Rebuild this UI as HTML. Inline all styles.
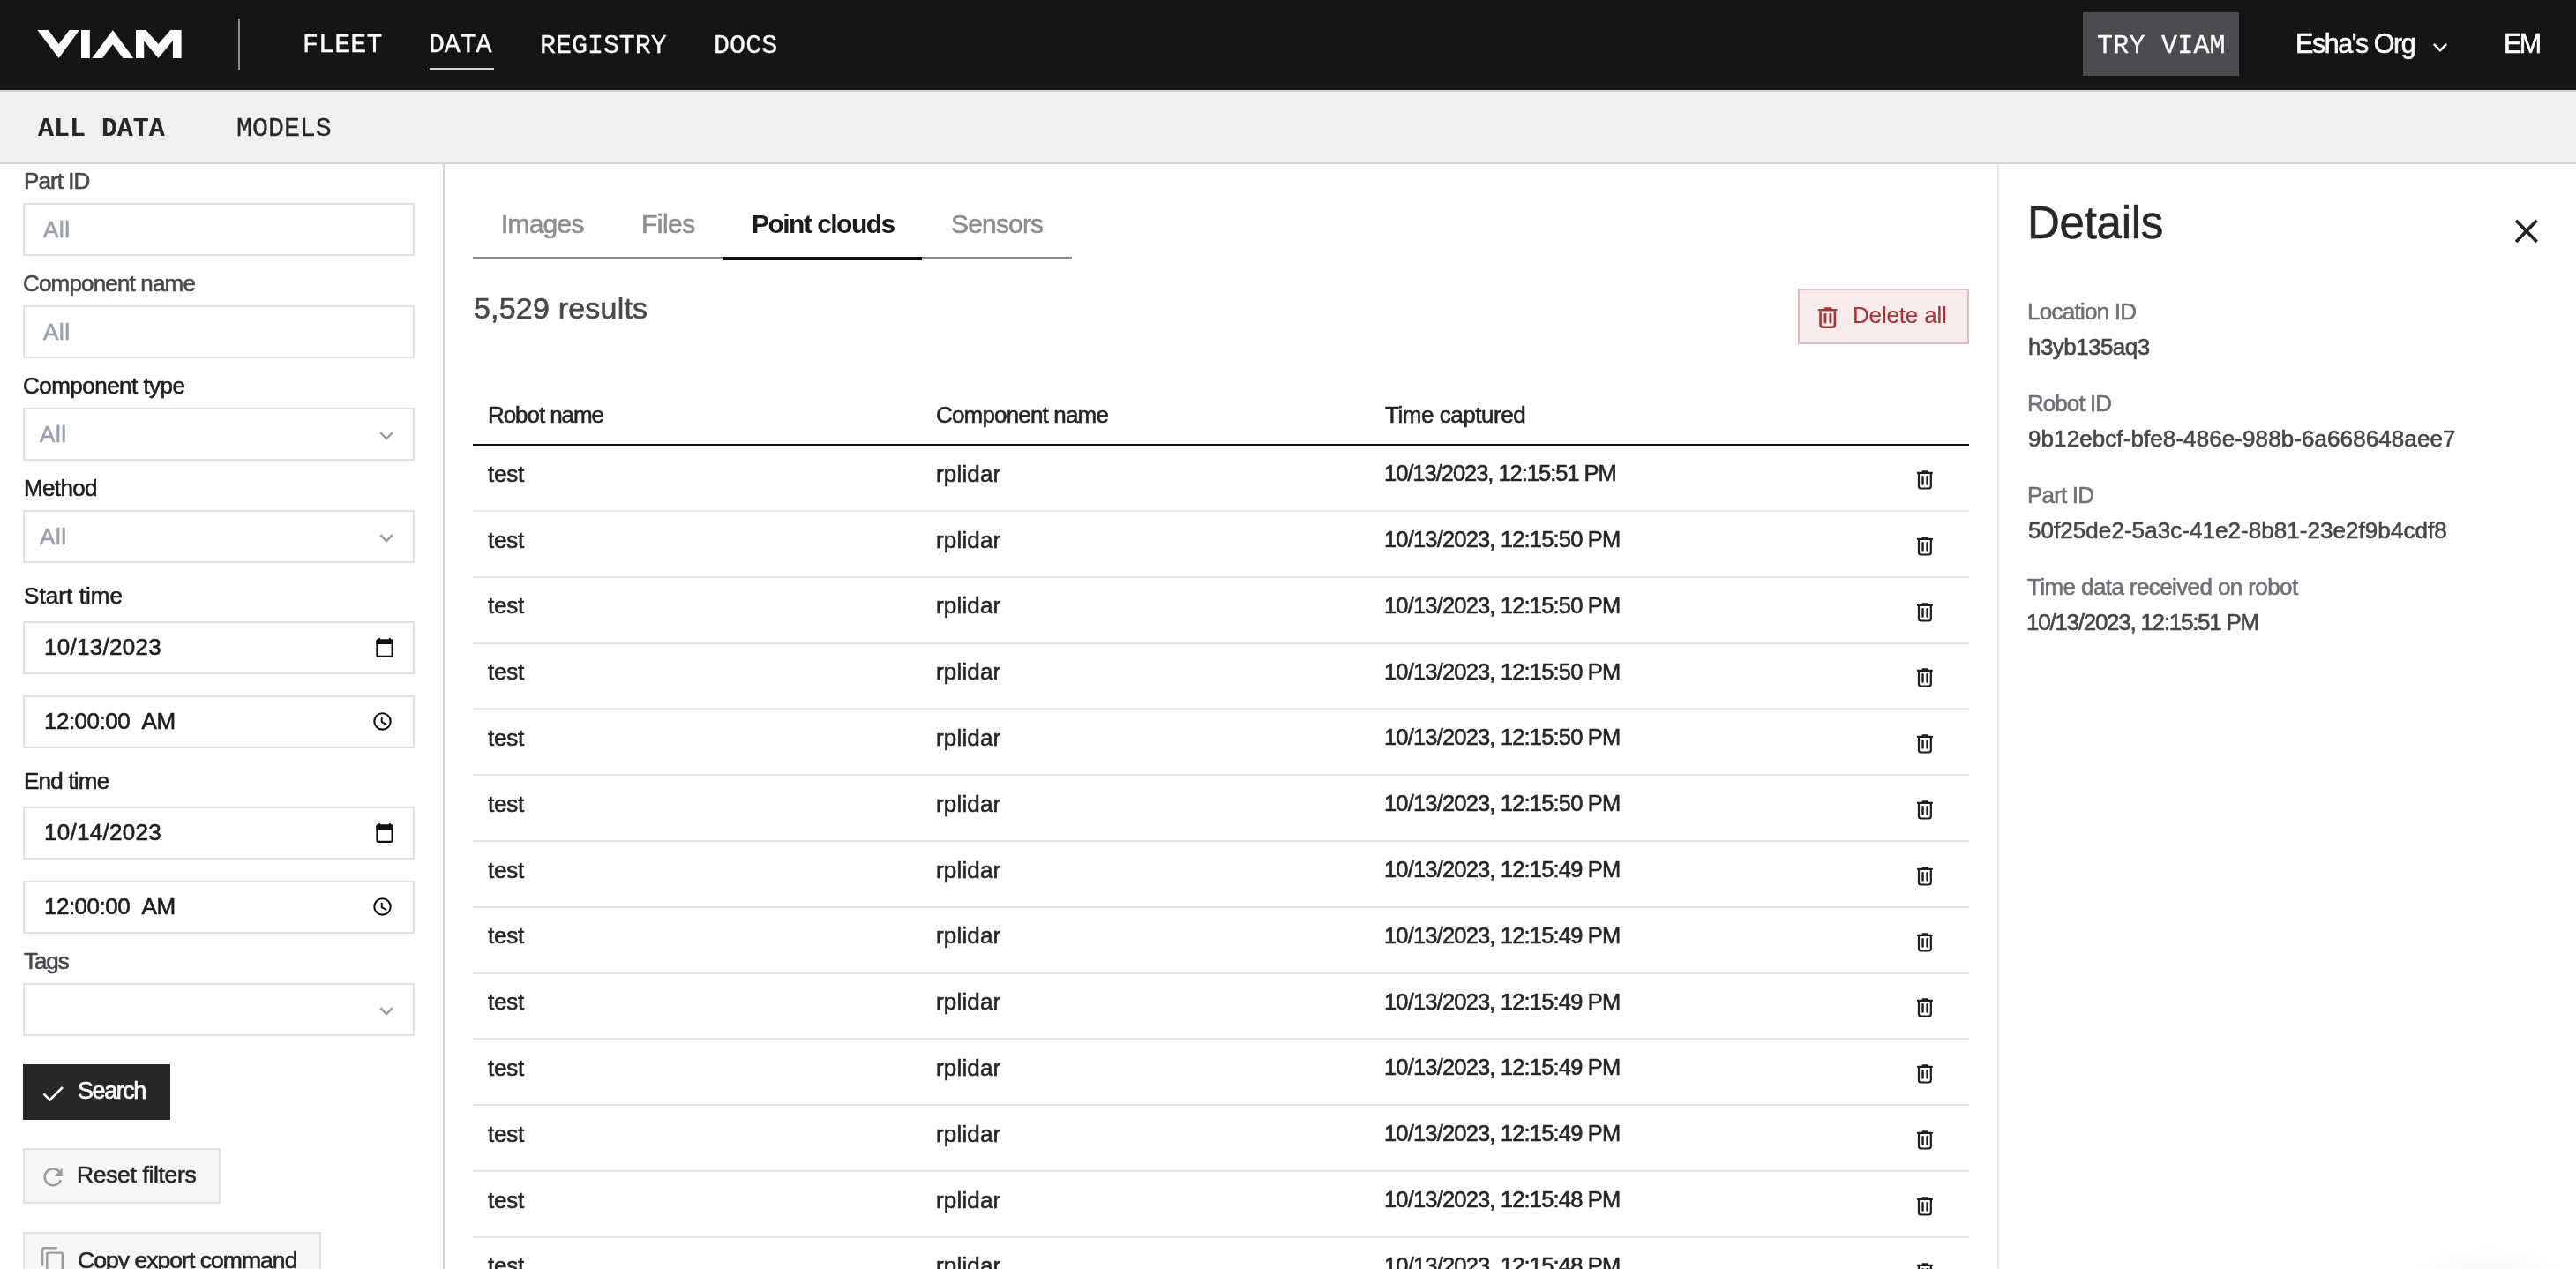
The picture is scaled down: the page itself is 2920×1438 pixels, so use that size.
<!DOCTYPE html><html><head><meta charset="utf-8"><title>Viam Data</title><style>
html,body{margin:0;padding:0;width:2920px;height:1438px;overflow:hidden;background:#fff;}
body{position:relative;font-family:"Liberation Sans", sans-serif;}
.t{position:absolute;white-space:nowrap;will-change:transform;-webkit-text-stroke:0.6px currentColor;}
.s{font-family:"Liberation Sans", sans-serif;}
.m{font-family:"Liberation Mono", monospace;}
.r{position:absolute;box-sizing:border-box;}
svg{position:absolute;overflow:visible;}
@media (max-width:2000px){html{zoom:0.5;}}
</style></head><body>
<div class="r" style="left:0px;top:0px;width:2920px;height:102px;background:#141616;"></div>
<div class="r" style="left:0px;top:102px;width:2920px;height:2px;background:#d3d3d7;"></div>
<div class="r" style="left:0px;top:104px;width:2920px;height:80px;background:#f0f0f2;"></div>
<div class="r" style="left:0px;top:184px;width:2920px;height:2px;background:#d4d4d8;"></div>
<svg style="left:0;top:0" width="260" height="100"><path fill="#fff" d="M42.4,34 L54.8,34 L66.6,50 L78.6,34 L90,34 L66.6,66 Z M92,34 L101.8,34 L101.8,66 L92,66 Z M104.3,66 L127.8,34 L151.3,66 L139.5,66 L127.8,50.3 L116,66 Z M154,34 L165.4,34 L179.5,50 L193.2,34 L205.6,34 L205.6,66 L195.9,66 L195.9,46 L179.5,66 L163.2,46.6 L163.2,66 L154,66 Z"/></svg>
<div class="r" style="left:270px;top:21px;width:2px;height:58px;background:#8c8c8c;"></div>
<div class="t m" style="left:343.00px;top:36.37px;font-size:30px;line-height:30px;color:#fff;letter-spacing:0.100px;-webkit-text-stroke-width:0.3px;">FLEET</div>
<div class="t m" style="left:486.00px;top:36.37px;font-size:30px;line-height:30px;color:#fff;letter-spacing:-0.133px;-webkit-text-stroke-width:0.3px;">DATA</div>
<div class="r" style="left:487px;top:77px;width:73px;height:2px;background:#d4d4dc;"></div>
<div class="t m" style="left:611.50px;top:36.52px;font-size:30px;line-height:30px;color:#fff;letter-spacing:-0.029px;-webkit-text-stroke-width:0.3px;">REGISTRY</div>
<div class="t m" style="left:809.00px;top:36.52px;font-size:30px;line-height:30px;color:#fff;letter-spacing:0.067px;-webkit-text-stroke-width:0.3px;">DOCS</div>
<div class="r" style="left:2361px;top:14px;width:177px;height:72px;background:#4b4c50;"></div>
<div class="t m" style="left:2376.50px;top:36.52px;font-size:30px;line-height:30px;color:#fff;letter-spacing:0.229px;-webkit-text-stroke-width:0.3px;">TRY VIAM</div>
<div class="t s" style="left:2602.00px;top:33.68px;font-size:30.5px;line-height:30.5px;color:#fff;letter-spacing:-1.467px;">Esha&#39;s Org</div>
<svg style="left:2757px;top:47.6px" width="18" height="12"><path d="M1.8,1.8 L9,9.2 L16.2,1.8" fill="none" stroke="#fff" stroke-width="2.4"/></svg>
<div class="t s" style="left:2837.50px;top:34.08px;font-size:30.5px;line-height:30.5px;color:#fff;letter-spacing:-2.600px;">EM</div>
<div class="t m" style="left:42.50px;top:130.72px;font-size:30px;line-height:30px;color:#262626;letter-spacing:-0.029px;font-weight:700;-webkit-text-stroke-width:0.1px;">ALL DATA</div>
<div class="t m" style="left:268.00px;top:130.52px;font-size:30px;line-height:30px;color:#262626;letter-spacing:-0.040px;-webkit-text-stroke-width:0.3px;">MODELS</div>
<div class="r" style="left:502px;top:186px;width:2px;height:1252px;background:#d5d5d7;"></div>
<div class="t s" style="left:27.00px;top:192.39px;font-size:26px;line-height:26px;color:#45484d;letter-spacing:-0.933px;">Part ID</div>
<div class="r" style="left:26px;top:230px;width:444px;height:60px;border:2px solid #e0e0e3;background:#fff;"></div>
<div class="t s" style="left:48.50px;top:246.99px;font-size:26px;line-height:26px;color:#98a0ad;letter-spacing:0.600px;">All</div>
<div class="t s" style="left:25.50px;top:308.39px;font-size:26px;line-height:26px;color:#46484d;letter-spacing:-0.831px;">Component name</div>
<div class="r" style="left:26px;top:346px;width:444px;height:60px;border:2px solid #e0e0e3;background:#fff;"></div>
<div class="t s" style="left:48.50px;top:362.99px;font-size:26px;line-height:26px;color:#98a0ad;letter-spacing:0.600px;">All</div>
<div class="t s" style="left:25.50px;top:424.39px;font-size:26px;line-height:26px;color:#1e1e1e;letter-spacing:-0.523px;">Component type</div>
<div class="r" style="left:26px;top:462px;width:444px;height:60px;border:2px solid #e0e0e3;background:#fff;"></div>
<div class="t s" style="left:44.50px;top:478.99px;font-size:26px;line-height:26px;color:#98a0ad;letter-spacing:0.600px;">All</div>
<svg style="left:430px;top:489px" width="17" height="11"><path d="M1.3,1.2 L8,8.3 L14.7,1.2" fill="none" stroke="#9a9ca3" stroke-width="2.5"/></svg>
<div class="t s" style="left:26.50px;top:540.19px;font-size:26px;line-height:26px;color:#1e1e1e;letter-spacing:-0.640px;">Method</div>
<div class="r" style="left:26px;top:578px;width:444px;height:60px;border:2px solid #e0e0e3;background:#fff;"></div>
<div class="t s" style="left:44.50px;top:594.99px;font-size:26px;line-height:26px;color:#98a0ad;letter-spacing:0.600px;">All</div>
<svg style="left:430px;top:605px" width="17" height="11"><path d="M1.3,1.2 L8,8.3 L14.7,1.2" fill="none" stroke="#9a9ca3" stroke-width="2.5"/></svg>
<div class="t s" style="left:26.50px;top:662.39px;font-size:26px;line-height:26px;color:#1e1e1e;letter-spacing:0.089px;">Start time</div>
<div class="r" style="left:26px;top:704px;width:444px;height:60px;border:2px solid #e0e0e3;background:#fff;"></div>
<div class="t s" style="left:49.50px;top:720.49px;font-size:26px;line-height:26px;color:#1e1e1e;letter-spacing:0.289px;">10/13/2023</div>
<svg style="left:426px;top:723px" width="22" height="22"><rect x="1.4" y="2.5" width="17.2" height="18.4" rx="1.6" fill="none" stroke="#111" stroke-width="2.1"/><rect x="0.4" y="1.5" width="19.2" height="5.6" rx="1.2" fill="#111"/><rect x="3.2" y="0" width="1.9" height="2.5" fill="#111"/><rect x="14.9" y="0" width="1.9" height="2.5" fill="#111"/></svg>
<div class="r" style="left:26px;top:788px;width:444px;height:60px;border:2px solid #e0e0e3;background:#fff;"></div>
<div class="t s" style="left:49.50px;top:804.39px;font-size:26px;line-height:26px;color:#1e1e1e;letter-spacing:-0.509px;">12:00:00&nbsp;&nbsp;AM</div>
<svg style="left:422px;top:807px" width="24" height="24"><circle cx="11.5" cy="10.4" r="9.2" fill="none" stroke="#111" stroke-width="2.1"/><path d="M10.7,5.8 L10.7,11.2 L16.2,14.2" fill="none" stroke="#111" stroke-width="1.9"/></svg>
<div class="t s" style="left:27.00px;top:872.49px;font-size:26px;line-height:26px;color:#1e1e1e;letter-spacing:-0.771px;">End time</div>
<div class="r" style="left:26px;top:914px;width:444px;height:60px;border:2px solid #e0e0e3;background:#fff;"></div>
<div class="t s" style="left:49.50px;top:930.49px;font-size:26px;line-height:26px;color:#1e1e1e;letter-spacing:0.289px;">10/14/2023</div>
<svg style="left:426px;top:933px" width="22" height="22"><rect x="1.4" y="2.5" width="17.2" height="18.4" rx="1.6" fill="none" stroke="#111" stroke-width="2.1"/><rect x="0.4" y="1.5" width="19.2" height="5.6" rx="1.2" fill="#111"/><rect x="3.2" y="0" width="1.9" height="2.5" fill="#111"/><rect x="14.9" y="0" width="1.9" height="2.5" fill="#111"/></svg>
<div class="r" style="left:26px;top:998px;width:444px;height:60px;border:2px solid #e0e0e3;background:#fff;"></div>
<div class="t s" style="left:49.50px;top:1014.39px;font-size:26px;line-height:26px;color:#1e1e1e;letter-spacing:-0.509px;">12:00:00&nbsp;&nbsp;AM</div>
<svg style="left:422px;top:1017px" width="24" height="24"><circle cx="11.5" cy="10.4" r="9.2" fill="none" stroke="#111" stroke-width="2.1"/><path d="M10.7,5.8 L10.7,11.2 L16.2,14.2" fill="none" stroke="#111" stroke-width="1.9"/></svg>
<div class="t s" style="left:26.50px;top:1076.49px;font-size:26px;line-height:26px;color:#45484d;letter-spacing:-1.067px;">Tags</div>
<div class="r" style="left:26px;top:1114px;width:444px;height:60px;border:2px solid #e0e0e3;background:#fff;"></div>
<svg style="left:430px;top:1141px" width="17" height="11"><path d="M1.3,1.2 L8,8.3 L14.7,1.2" fill="none" stroke="#9a9ca3" stroke-width="2.5"/></svg>
<div class="r" style="left:26px;top:1206px;width:167px;height:63px;background:#272727;"></div>
<svg style="left:48px;top:1230px" width="25" height="19"><path d="M1.5,9.5 L8.5,16.5 L23,2" fill="none" stroke="#fff" stroke-width="2.6"/></svg>
<div class="t s" style="left:88.00px;top:1223.44px;font-size:27px;line-height:27px;color:#ffffff;letter-spacing:-1.440px;">Search</div>
<div class="r" style="left:26px;top:1301px;width:224px;height:63px;border:2px solid #dfe0e4;background:#f6f6f6;"></div>
<svg style="left:48px;top:1322px" width="24" height="24"><path d="M20.9,15.1 A9.4,9.4 0 1 1 19.4,5.9" fill="none" stroke="#9b9ba1" stroke-width="2.6"/><path d="M22.7,1.3 L22.7,10.9 L13.65,10.9 Z" fill="#9b9ba1"/></svg>
<div class="t s" style="left:87.00px;top:1318.26px;font-size:26.5px;line-height:26.5px;color:#262626;letter-spacing:-0.350px;">Reset filters</div>
<div class="r" style="left:26px;top:1396px;width:338px;height:70px;border:2px solid #dfe0e4;background:#f6f6f6;"></div>
<svg style="left:46px;top:1413px" width="26" height="30"><path d="M2.1,21.5 L2.1,2.6 Q2.1,1.2 3.5,1.2 L18.8,1.2" fill="none" stroke="#9b9ba1" stroke-width="2.4"/><rect x="7.3" y="6.6" width="17.5" height="26" rx="1.5" fill="none" stroke="#9b9ba1" stroke-width="2.4"/></svg>
<div class="t s" style="left:88.00px;top:1414.86px;font-size:26.5px;line-height:26.5px;color:#262626;letter-spacing:-0.956px;">Copy export command</div>
<div class="r" style="left:2264px;top:186px;width:2px;height:1252px;background:#e6e6ea;"></div>
<div class="t s" style="left:568.00px;top:238.90px;font-size:30px;line-height:30px;color:#8e8e8e;letter-spacing:-0.800px;">Images</div>
<div class="t s" style="left:727.00px;top:238.90px;font-size:30px;line-height:30px;color:#8e8e8e;letter-spacing:-0.550px;">Files</div>
<div class="t s" style="left:851.50px;top:239.20px;font-size:30px;line-height:30px;color:#1c1c1c;letter-spacing:-1.527px;font-weight:700;-webkit-text-stroke-width:0.0px;">Point clouds</div>
<div class="t s" style="left:1078.00px;top:239.20px;font-size:30px;line-height:30px;color:#8e8e8e;letter-spacing:-0.833px;">Sensors</div>
<div class="r" style="left:536px;top:291px;width:679px;height:2px;background:#8a8a8a;"></div>
<div class="r" style="left:820px;top:291px;width:225px;height:4px;background:#111;"></div>
<div class="t s" style="left:536.50px;top:332.41px;font-size:34px;line-height:34px;color:#46484d;letter-spacing:0.200px;">5,529 results</div>
<div class="r" style="left:2038px;top:327px;width:194px;height:63px;border:2px solid #e5bcbc;background:#f7ecec;"></div>
<svg style="left:2060.4px;top:347.8px" width="26.07" height="26.69" viewBox="0 0 22 24" preserveAspectRatio="none"><path d="M1.9,2.9 L17.9,2.9" stroke="#a83434" stroke-width="2.2" stroke-linecap="round"/><path d="M7.6,1.3 L12.8,1.3" stroke="#a83434" stroke-width="2.2" stroke-linecap="round"/><path d="M3,4 L3,18 Q3,20.5 5.5,20.5 L14.3,20.5 Q16.8,20.5 16.8,18 L16.8,4" fill="none" stroke="#a83434" stroke-width="2.2"/><path d="M7.55,7.2 L7.55,15.5 M12.55,7.2 L12.55,15.5" stroke="#a83434" stroke-width="2.4" stroke-linecap="round"/></svg>
<div class="t s" style="left:2099.50px;top:344.39px;font-size:26px;line-height:26px;color:#a83434;letter-spacing:-0.178px;-webkit-text-stroke-width:0.15px;">Delete all</div>
<div class="t s" style="left:552.50px;top:457.49px;font-size:26px;line-height:26px;color:#262626;letter-spacing:-1.067px;">Robot name</div>
<div class="t s" style="left:1061.00px;top:457.39px;font-size:26px;line-height:26px;color:#262626;letter-spacing:-0.831px;">Component name</div>
<div class="t s" style="left:1570.00px;top:457.39px;font-size:26px;line-height:26px;color:#262626;letter-spacing:-0.467px;">Time captured</div>
<div class="r" style="left:536px;top:503px;width:1696px;height:2px;background:#111;"></div>
<div class="t s" style="left:553.00px;top:523.79px;font-size:26px;line-height:26px;color:#262626;letter-spacing:-0.267px;">test</div>
<div class="t s" style="left:1060.50px;top:523.79px;font-size:26px;line-height:26px;color:#262626;letter-spacing:0.167px;">rplidar</div>
<div class="t s" style="left:1569.00px;top:524.21px;font-size:25.5px;line-height:25.5px;color:#262626;letter-spacing:-1.027px;">10/13/2023, 12:15:51 PM</div>
<svg style="left:2172px;top:533.0px" width="22.00" height="24.00" viewBox="0 0 22 24" preserveAspectRatio="none"><path d="M1.9,2.9 L17.9,2.9" stroke="#1e1e1e" stroke-width="2.2" stroke-linecap="round"/><path d="M7.6,1.3 L12.8,1.3" stroke="#1e1e1e" stroke-width="2.2" stroke-linecap="round"/><path d="M3,4 L3,18 Q3,20.5 5.5,20.5 L14.3,20.5 Q16.8,20.5 16.8,18 L16.8,4" fill="none" stroke="#1e1e1e" stroke-width="2.2"/><path d="M7.55,7.2 L7.55,15.5 M12.55,7.2 L12.55,15.5" stroke="#1e1e1e" stroke-width="2.4" stroke-linecap="round"/></svg>
<div class="r" style="left:536px;top:578.0px;width:1696px;height:2px;background:#e4e4e8;"></div>
<div class="t s" style="left:553.00px;top:598.59px;font-size:26px;line-height:26px;color:#262626;letter-spacing:-0.267px;">test</div>
<div class="t s" style="left:1060.50px;top:598.59px;font-size:26px;line-height:26px;color:#262626;letter-spacing:0.167px;">rplidar</div>
<div class="t s" style="left:1569.00px;top:599.01px;font-size:25.5px;line-height:25.5px;color:#262626;letter-spacing:-0.827px;">10/13/2023, 12:15:50 PM</div>
<svg style="left:2172px;top:607.8px" width="22.00" height="24.00" viewBox="0 0 22 24" preserveAspectRatio="none"><path d="M1.9,2.9 L17.9,2.9" stroke="#1e1e1e" stroke-width="2.2" stroke-linecap="round"/><path d="M7.6,1.3 L12.8,1.3" stroke="#1e1e1e" stroke-width="2.2" stroke-linecap="round"/><path d="M3,4 L3,18 Q3,20.5 5.5,20.5 L14.3,20.5 Q16.8,20.5 16.8,18 L16.8,4" fill="none" stroke="#1e1e1e" stroke-width="2.2"/><path d="M7.55,7.2 L7.55,15.5 M12.55,7.2 L12.55,15.5" stroke="#1e1e1e" stroke-width="2.4" stroke-linecap="round"/></svg>
<div class="r" style="left:536px;top:652.8px;width:1696px;height:2px;background:#e4e4e8;"></div>
<div class="t s" style="left:553.00px;top:673.39px;font-size:26px;line-height:26px;color:#262626;letter-spacing:-0.267px;">test</div>
<div class="t s" style="left:1060.50px;top:673.39px;font-size:26px;line-height:26px;color:#262626;letter-spacing:0.167px;">rplidar</div>
<div class="t s" style="left:1569.00px;top:673.81px;font-size:25.5px;line-height:25.5px;color:#262626;letter-spacing:-0.827px;">10/13/2023, 12:15:50 PM</div>
<svg style="left:2172px;top:682.6px" width="22.00" height="24.00" viewBox="0 0 22 24" preserveAspectRatio="none"><path d="M1.9,2.9 L17.9,2.9" stroke="#1e1e1e" stroke-width="2.2" stroke-linecap="round"/><path d="M7.6,1.3 L12.8,1.3" stroke="#1e1e1e" stroke-width="2.2" stroke-linecap="round"/><path d="M3,4 L3,18 Q3,20.5 5.5,20.5 L14.3,20.5 Q16.8,20.5 16.8,18 L16.8,4" fill="none" stroke="#1e1e1e" stroke-width="2.2"/><path d="M7.55,7.2 L7.55,15.5 M12.55,7.2 L12.55,15.5" stroke="#1e1e1e" stroke-width="2.4" stroke-linecap="round"/></svg>
<div class="r" style="left:536px;top:727.6px;width:1696px;height:2px;background:#e4e4e8;"></div>
<div class="t s" style="left:553.00px;top:748.19px;font-size:26px;line-height:26px;color:#262626;letter-spacing:-0.267px;">test</div>
<div class="t s" style="left:1060.50px;top:748.19px;font-size:26px;line-height:26px;color:#262626;letter-spacing:0.167px;">rplidar</div>
<div class="t s" style="left:1569.00px;top:748.61px;font-size:25.5px;line-height:25.5px;color:#262626;letter-spacing:-0.827px;">10/13/2023, 12:15:50 PM</div>
<svg style="left:2172px;top:757.4px" width="22.00" height="24.00" viewBox="0 0 22 24" preserveAspectRatio="none"><path d="M1.9,2.9 L17.9,2.9" stroke="#1e1e1e" stroke-width="2.2" stroke-linecap="round"/><path d="M7.6,1.3 L12.8,1.3" stroke="#1e1e1e" stroke-width="2.2" stroke-linecap="round"/><path d="M3,4 L3,18 Q3,20.5 5.5,20.5 L14.3,20.5 Q16.8,20.5 16.8,18 L16.8,4" fill="none" stroke="#1e1e1e" stroke-width="2.2"/><path d="M7.55,7.2 L7.55,15.5 M12.55,7.2 L12.55,15.5" stroke="#1e1e1e" stroke-width="2.4" stroke-linecap="round"/></svg>
<div class="r" style="left:536px;top:802.4px;width:1696px;height:2px;background:#e4e4e8;"></div>
<div class="t s" style="left:553.00px;top:822.99px;font-size:26px;line-height:26px;color:#262626;letter-spacing:-0.267px;">test</div>
<div class="t s" style="left:1060.50px;top:822.99px;font-size:26px;line-height:26px;color:#262626;letter-spacing:0.167px;">rplidar</div>
<div class="t s" style="left:1569.00px;top:823.41px;font-size:25.5px;line-height:25.5px;color:#262626;letter-spacing:-0.827px;">10/13/2023, 12:15:50 PM</div>
<svg style="left:2172px;top:832.2px" width="22.00" height="24.00" viewBox="0 0 22 24" preserveAspectRatio="none"><path d="M1.9,2.9 L17.9,2.9" stroke="#1e1e1e" stroke-width="2.2" stroke-linecap="round"/><path d="M7.6,1.3 L12.8,1.3" stroke="#1e1e1e" stroke-width="2.2" stroke-linecap="round"/><path d="M3,4 L3,18 Q3,20.5 5.5,20.5 L14.3,20.5 Q16.8,20.5 16.8,18 L16.8,4" fill="none" stroke="#1e1e1e" stroke-width="2.2"/><path d="M7.55,7.2 L7.55,15.5 M12.55,7.2 L12.55,15.5" stroke="#1e1e1e" stroke-width="2.4" stroke-linecap="round"/></svg>
<div class="r" style="left:536px;top:877.2px;width:1696px;height:2px;background:#e4e4e8;"></div>
<div class="t s" style="left:553.00px;top:897.79px;font-size:26px;line-height:26px;color:#262626;letter-spacing:-0.267px;">test</div>
<div class="t s" style="left:1060.50px;top:897.79px;font-size:26px;line-height:26px;color:#262626;letter-spacing:0.167px;">rplidar</div>
<div class="t s" style="left:1569.00px;top:898.21px;font-size:25.5px;line-height:25.5px;color:#262626;letter-spacing:-0.827px;">10/13/2023, 12:15:50 PM</div>
<svg style="left:2172px;top:907.0px" width="22.00" height="24.00" viewBox="0 0 22 24" preserveAspectRatio="none"><path d="M1.9,2.9 L17.9,2.9" stroke="#1e1e1e" stroke-width="2.2" stroke-linecap="round"/><path d="M7.6,1.3 L12.8,1.3" stroke="#1e1e1e" stroke-width="2.2" stroke-linecap="round"/><path d="M3,4 L3,18 Q3,20.5 5.5,20.5 L14.3,20.5 Q16.8,20.5 16.8,18 L16.8,4" fill="none" stroke="#1e1e1e" stroke-width="2.2"/><path d="M7.55,7.2 L7.55,15.5 M12.55,7.2 L12.55,15.5" stroke="#1e1e1e" stroke-width="2.4" stroke-linecap="round"/></svg>
<div class="r" style="left:536px;top:952.0px;width:1696px;height:2px;background:#e4e4e8;"></div>
<div class="t s" style="left:553.00px;top:972.59px;font-size:26px;line-height:26px;color:#262626;letter-spacing:-0.267px;">test</div>
<div class="t s" style="left:1060.50px;top:972.59px;font-size:26px;line-height:26px;color:#262626;letter-spacing:0.167px;">rplidar</div>
<div class="t s" style="left:1569.00px;top:973.01px;font-size:25.5px;line-height:25.5px;color:#262626;letter-spacing:-0.827px;">10/13/2023, 12:15:49 PM</div>
<svg style="left:2172px;top:981.8px" width="22.00" height="24.00" viewBox="0 0 22 24" preserveAspectRatio="none"><path d="M1.9,2.9 L17.9,2.9" stroke="#1e1e1e" stroke-width="2.2" stroke-linecap="round"/><path d="M7.6,1.3 L12.8,1.3" stroke="#1e1e1e" stroke-width="2.2" stroke-linecap="round"/><path d="M3,4 L3,18 Q3,20.5 5.5,20.5 L14.3,20.5 Q16.8,20.5 16.8,18 L16.8,4" fill="none" stroke="#1e1e1e" stroke-width="2.2"/><path d="M7.55,7.2 L7.55,15.5 M12.55,7.2 L12.55,15.5" stroke="#1e1e1e" stroke-width="2.4" stroke-linecap="round"/></svg>
<div class="r" style="left:536px;top:1026.8px;width:1696px;height:2px;background:#e4e4e8;"></div>
<div class="t s" style="left:553.00px;top:1047.39px;font-size:26px;line-height:26px;color:#262626;letter-spacing:-0.267px;">test</div>
<div class="t s" style="left:1060.50px;top:1047.39px;font-size:26px;line-height:26px;color:#262626;letter-spacing:0.167px;">rplidar</div>
<div class="t s" style="left:1569.00px;top:1047.81px;font-size:25.5px;line-height:25.5px;color:#262626;letter-spacing:-0.827px;">10/13/2023, 12:15:49 PM</div>
<svg style="left:2172px;top:1056.6px" width="22.00" height="24.00" viewBox="0 0 22 24" preserveAspectRatio="none"><path d="M1.9,2.9 L17.9,2.9" stroke="#1e1e1e" stroke-width="2.2" stroke-linecap="round"/><path d="M7.6,1.3 L12.8,1.3" stroke="#1e1e1e" stroke-width="2.2" stroke-linecap="round"/><path d="M3,4 L3,18 Q3,20.5 5.5,20.5 L14.3,20.5 Q16.8,20.5 16.8,18 L16.8,4" fill="none" stroke="#1e1e1e" stroke-width="2.2"/><path d="M7.55,7.2 L7.55,15.5 M12.55,7.2 L12.55,15.5" stroke="#1e1e1e" stroke-width="2.4" stroke-linecap="round"/></svg>
<div class="r" style="left:536px;top:1101.6px;width:1696px;height:2px;background:#e4e4e8;"></div>
<div class="t s" style="left:553.00px;top:1122.19px;font-size:26px;line-height:26px;color:#262626;letter-spacing:-0.267px;">test</div>
<div class="t s" style="left:1060.50px;top:1122.19px;font-size:26px;line-height:26px;color:#262626;letter-spacing:0.167px;">rplidar</div>
<div class="t s" style="left:1569.00px;top:1122.61px;font-size:25.5px;line-height:25.5px;color:#262626;letter-spacing:-0.827px;">10/13/2023, 12:15:49 PM</div>
<svg style="left:2172px;top:1131.4px" width="22.00" height="24.00" viewBox="0 0 22 24" preserveAspectRatio="none"><path d="M1.9,2.9 L17.9,2.9" stroke="#1e1e1e" stroke-width="2.2" stroke-linecap="round"/><path d="M7.6,1.3 L12.8,1.3" stroke="#1e1e1e" stroke-width="2.2" stroke-linecap="round"/><path d="M3,4 L3,18 Q3,20.5 5.5,20.5 L14.3,20.5 Q16.8,20.5 16.8,18 L16.8,4" fill="none" stroke="#1e1e1e" stroke-width="2.2"/><path d="M7.55,7.2 L7.55,15.5 M12.55,7.2 L12.55,15.5" stroke="#1e1e1e" stroke-width="2.4" stroke-linecap="round"/></svg>
<div class="r" style="left:536px;top:1176.4px;width:1696px;height:2px;background:#e4e4e8;"></div>
<div class="t s" style="left:553.00px;top:1196.99px;font-size:26px;line-height:26px;color:#262626;letter-spacing:-0.267px;">test</div>
<div class="t s" style="left:1060.50px;top:1196.99px;font-size:26px;line-height:26px;color:#262626;letter-spacing:0.167px;">rplidar</div>
<div class="t s" style="left:1569.00px;top:1197.41px;font-size:25.5px;line-height:25.5px;color:#262626;letter-spacing:-0.827px;">10/13/2023, 12:15:49 PM</div>
<svg style="left:2172px;top:1206.1999999999998px" width="22.00" height="24.00" viewBox="0 0 22 24" preserveAspectRatio="none"><path d="M1.9,2.9 L17.9,2.9" stroke="#1e1e1e" stroke-width="2.2" stroke-linecap="round"/><path d="M7.6,1.3 L12.8,1.3" stroke="#1e1e1e" stroke-width="2.2" stroke-linecap="round"/><path d="M3,4 L3,18 Q3,20.5 5.5,20.5 L14.3,20.5 Q16.8,20.5 16.8,18 L16.8,4" fill="none" stroke="#1e1e1e" stroke-width="2.2"/><path d="M7.55,7.2 L7.55,15.5 M12.55,7.2 L12.55,15.5" stroke="#1e1e1e" stroke-width="2.4" stroke-linecap="round"/></svg>
<div class="r" style="left:536px;top:1251.1999999999998px;width:1696px;height:2px;background:#e4e4e8;"></div>
<div class="t s" style="left:553.00px;top:1271.79px;font-size:26px;line-height:26px;color:#262626;letter-spacing:-0.267px;">test</div>
<div class="t s" style="left:1060.50px;top:1271.79px;font-size:26px;line-height:26px;color:#262626;letter-spacing:0.167px;">rplidar</div>
<div class="t s" style="left:1569.00px;top:1272.21px;font-size:25.5px;line-height:25.5px;color:#262626;letter-spacing:-0.827px;">10/13/2023, 12:15:49 PM</div>
<svg style="left:2172px;top:1281.0px" width="22.00" height="24.00" viewBox="0 0 22 24" preserveAspectRatio="none"><path d="M1.9,2.9 L17.9,2.9" stroke="#1e1e1e" stroke-width="2.2" stroke-linecap="round"/><path d="M7.6,1.3 L12.8,1.3" stroke="#1e1e1e" stroke-width="2.2" stroke-linecap="round"/><path d="M3,4 L3,18 Q3,20.5 5.5,20.5 L14.3,20.5 Q16.8,20.5 16.8,18 L16.8,4" fill="none" stroke="#1e1e1e" stroke-width="2.2"/><path d="M7.55,7.2 L7.55,15.5 M12.55,7.2 L12.55,15.5" stroke="#1e1e1e" stroke-width="2.4" stroke-linecap="round"/></svg>
<div class="r" style="left:536px;top:1326.0px;width:1696px;height:2px;background:#e4e4e8;"></div>
<div class="t s" style="left:553.00px;top:1346.59px;font-size:26px;line-height:26px;color:#262626;letter-spacing:-0.267px;">test</div>
<div class="t s" style="left:1060.50px;top:1346.59px;font-size:26px;line-height:26px;color:#262626;letter-spacing:0.167px;">rplidar</div>
<div class="t s" style="left:1569.00px;top:1347.01px;font-size:25.5px;line-height:25.5px;color:#262626;letter-spacing:-0.827px;">10/13/2023, 12:15:48 PM</div>
<svg style="left:2172px;top:1355.8px" width="22.00" height="24.00" viewBox="0 0 22 24" preserveAspectRatio="none"><path d="M1.9,2.9 L17.9,2.9" stroke="#1e1e1e" stroke-width="2.2" stroke-linecap="round"/><path d="M7.6,1.3 L12.8,1.3" stroke="#1e1e1e" stroke-width="2.2" stroke-linecap="round"/><path d="M3,4 L3,18 Q3,20.5 5.5,20.5 L14.3,20.5 Q16.8,20.5 16.8,18 L16.8,4" fill="none" stroke="#1e1e1e" stroke-width="2.2"/><path d="M7.55,7.2 L7.55,15.5 M12.55,7.2 L12.55,15.5" stroke="#1e1e1e" stroke-width="2.4" stroke-linecap="round"/></svg>
<div class="r" style="left:536px;top:1400.8px;width:1696px;height:2px;background:#e4e4e8;"></div>
<div class="t s" style="left:553.00px;top:1421.39px;font-size:26px;line-height:26px;color:#262626;letter-spacing:-0.267px;">test</div>
<div class="t s" style="left:1060.50px;top:1421.39px;font-size:26px;line-height:26px;color:#262626;letter-spacing:0.167px;">rplidar</div>
<div class="t s" style="left:1569.00px;top:1421.81px;font-size:25.5px;line-height:25.5px;color:#262626;letter-spacing:-0.827px;">10/13/2023, 12:15:48 PM</div>
<svg style="left:2172px;top:1430.6px" width="22.00" height="24.00" viewBox="0 0 22 24" preserveAspectRatio="none"><path d="M1.9,2.9 L17.9,2.9" stroke="#1e1e1e" stroke-width="2.2" stroke-linecap="round"/><path d="M7.6,1.3 L12.8,1.3" stroke="#1e1e1e" stroke-width="2.2" stroke-linecap="round"/><path d="M3,4 L3,18 Q3,20.5 5.5,20.5 L14.3,20.5 Q16.8,20.5 16.8,18 L16.8,4" fill="none" stroke="#1e1e1e" stroke-width="2.2"/><path d="M7.55,7.2 L7.55,15.5 M12.55,7.2 L12.55,15.5" stroke="#1e1e1e" stroke-width="2.4" stroke-linecap="round"/></svg>
<div class="r" style="left:536px;top:1475.6px;width:1696px;height:2px;background:#e4e4e8;"></div>
<div class="t s" style="left:2298.00px;top:226.92px;font-size:51px;line-height:51px;color:#282828;letter-spacing:-0.267px;">Details</div>
<svg style="left:2850px;top:248px" width="28" height="28"><path d="M2,1.7 L25.6,26 M25.6,1.7 L2,26" stroke="#262626" stroke-width="3.8"/></svg>
<div class="t s" style="left:2297.50px;top:339.99px;font-size:26px;line-height:26px;color:#6f7177;letter-spacing:-0.740px;">Location ID</div>
<div class="t s" style="left:2298.50px;top:380.29px;font-size:26px;line-height:26px;color:#45474b;letter-spacing:-0.556px;">h3yb135aq3</div>
<div class="t s" style="left:2297.50px;top:443.79px;font-size:26px;line-height:26px;color:#6f7177;letter-spacing:-0.943px;">Robot ID</div>
<div class="t s" style="left:2298.50px;top:483.69px;font-size:26px;line-height:26px;color:#45474b;letter-spacing:0.086px;">9b12ebcf-bfe8-486e-988b-6a668648aee7</div>
<div class="t s" style="left:2297.50px;top:547.89px;font-size:26px;line-height:26px;color:#6f7177;letter-spacing:-0.833px;">Part ID</div>
<div class="t s" style="left:2298.50px;top:587.89px;font-size:26px;line-height:26px;color:#45474b;letter-spacing:0.057px;">50f25de2-5a3c-41e2-8b81-23e2f9b4cdf8</div>
<div class="t s" style="left:2298.00px;top:652.19px;font-size:26px;line-height:26px;color:#6f7177;letter-spacing:-0.600px;">Time data received on robot</div>
<div class="t s" style="left:2297.00px;top:692.09px;font-size:26px;line-height:26px;color:#45474b;letter-spacing:-1.264px;">10/13/2023, 12:15:51 PM</div>
<div class="r" style="left:2700px;top:1380px;width:220px;height:58px;background:radial-gradient(ellipse 95px 42px at 120px 70px, rgba(0,0,0,0.035), rgba(0,0,0,0));"></div>
</body></html>
